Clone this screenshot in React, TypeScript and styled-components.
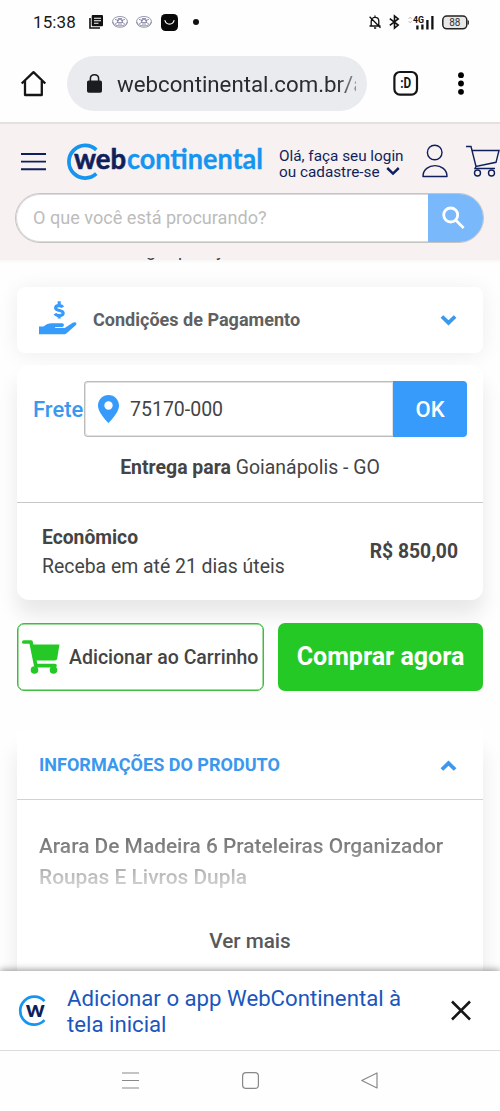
import React from "react";
import styled, { createGlobalStyle } from "styled-components";

const GlobalStyle = createGlobalStyle`
  * { box-sizing: border-box; }
  body { margin: 0; background: #fefefe; font-family: Roboto, "Liberation Sans", sans-serif; color: #444; }
  button { font-family: inherit; margin: 0; padding: 0; border: 0; background: none; color: inherit; }
  svg { display: block; flex: none; overflow: visible; }
`;

const Screen = styled.div`
  width: 500px;
  height: 1111px;
  display: flex;
  flex-direction: column;
  overflow: hidden;
`;

const Label = styled.span<{ size: number; weight?: number; color?: string; track?: number; line?: number }>`
  font-size: ${(p) => p.size}px;
  font-weight: ${(p) => p.weight ?? 400};
  color: ${(p) => p.color ?? "#444"};
  letter-spacing: ${(p) => p.track ?? 0}px;
  line-height: ${(p) => p.line ?? Math.round(p.size * 1.2)}px;
  white-space: nowrap;
`;

/* System status bar */
const StatusBar = styled.div`
  flex: none;
  height: 44px;
  padding: 0 31px 0 33px;
  display: flex;
  justify-content: space-between;
  align-items: center;
`;
const StatusGroup = styled.div<{ gap?: number }>`
  display: flex;
  align-items: center;
  gap: ${(p) => p.gap ?? 0}px;
`;
const Clock = styled(Label)`
  width: 56px;
`;
const NoticeDot = styled.i`
  width: 6px;
  height: 6px;
  margin-left: 7px;
  border-radius: 50%;
  background: #111;
`;

/* Browser toolbar */
const BrowserBar = styled.div`
  flex: none;
  height: 80px;
  padding: 12px 0 11px 20px;
  display: flex;
  align-items: center;
  border-bottom: 2px solid #e5e1e3;
`;
const AddressPill = styled.div`
  width: 300px;
  height: 55px;
  margin: 0 26px 0 20px;
  padding: 0 11px 0 20px;
  border-radius: 28px;
  background: #eaebef;
  display: flex;
  align-items: center;
  gap: 15px;
`;
const Address = styled.div`
  flex: 1;
  overflow: hidden;
  mask-image: linear-gradient(to right, #000 92%, rgba(0, 0, 0, 0.45));
`;
const DotsIcon = styled.svg`
  margin-left: 39px;
`;

/* Store header */
const StoreHeader = styled.header`
  flex: none;
  height: 136px;
  padding-top: 16px;
  background: #f7f1f1;
  box-shadow: 0 1px 3px rgba(120, 80, 80, 0.06);
`;
const HeaderRow = styled.div`
  height: 44px;
  padding-left: 20px;
  display: flex;
  align-items: center;
`;
const MenuIcon = styled.svg`
  margin-right: 20px;
`;
const LoginText = styled.div`
  width: 145px;
  margin: 0 1px 0 16px;
  padding-top: 3px;
  display: flex;
  flex-direction: column;
`;
const LoginLine = styled.div`
  display: flex;
  align-items: center;
  gap: 6px;
  height: 16px;
`;
const UserGlyph = styled.svg`
  margin-right: 18px;
`;
const SearchBox = styled.div`
  width: 469px;
  height: 50px;
  margin: 9px 0 0 15px;
  border-radius: 25px;
  border: 1px solid #c6c3c3;
  box-shadow: inset 0 0 0 1px #dcdada;
  background: #fff;
  overflow: hidden;
  display: flex;
  align-items: stretch;
  justify-content: space-between;
`;
const SearchHint = styled.div`
  display: flex;
  align-items: center;
  padding-left: 17px;
`;
const SearchButton = styled.button`
  width: 55px;
  background: #78b8fb;
  display: flex;
  align-items: center;
  padding-left: 14px;
`;

/* Page content */
const Content = styled.main`
  flex: 1;
  min-height: 0;
  overflow: hidden;
  padding: 0 17px;
  margin-top: -2px;
  z-index: 1;
`;
const HiddenLine = styled.div`
  height: 3px;
  margin-left: 129px;
  overflow: hidden;
  display: flex;
  align-items: flex-end;
`;
const Tail = styled(Label)<{ cell: number }>`
  width: ${(p) => p.cell}px;
  flex: none;
`;
const PaymentCard = styled.section`
  height: 66px;
  margin-top: 26px;
  padding: 0 26px 0 22px;
  border-radius: 8px;
  background: #fff;
  box-shadow: 0 2px 22px rgba(0, 0, 0, 0.07);
  display: flex;
  align-items: center;
`;
const PaymentTitle = styled(Label)`
  flex: 1;
  margin-left: 16px;
`;
const ShippingCard = styled.section`
  height: 235px;
  margin-top: 12px;
  border-radius: 12px;
  background: #fff;
  box-shadow: 0 15px 20px rgba(0, 0, 0, 0.09);
`;
const ZipRow = styled.div`
  padding: 16px 16px 0;
  display: flex;
  align-items: center;
`;
const ZipField = styled.div`
  flex: 1;
  height: 56px;
  border: 1px solid #bcbcbc;
  border-right: 0;
  box-shadow: inset 0 0 0 1px #e2e2e2;
  border-radius: 4px 0 0 4px;
  display: flex;
  align-items: center;
  padding-left: 13px;
  gap: 11px;
`;
const FreightLabel = styled(Label)`
  width: 51px;
  padding-top: 2px;
`;
const OkButton = styled.button`
  width: 74px;
  height: 56px;
  padding-top: 1px;
  border-radius: 0 4px 4px 0;
  background: #369bfb;
`;
const Destination = styled.div`
  height: 66px;
  padding-top: 18px;
  text-align: center;
  border-bottom: 1px solid #c6c8c8;
`;
const OptionRow = styled.div`
  height: 97px;
  padding: 0 25px;
  display: flex;
  align-items: center;
  justify-content: space-between;
`;
const OptionText = styled.div`
  display: flex;
  flex-direction: column;
`;
const Actions = styled.div`
  display: flex;
  gap: 14px;
  margin: 23px 0 0;
`;
const CartButton = styled.button`
  width: 247px;
  height: 68px;
  border: 1.5px solid #3fbc3f;
  box-shadow: inset 0 0 0 0.5px #3fbc3f;
  border-radius: 7px;
  background: #fff;
  display: flex;
  align-items: center;
  padding-left: 4px;
  gap: 9px;
`;
const BuyButton = styled.button`
  flex: 1;
  height: 68px;
  border-radius: 7px;
  background: #25c925;
`;
const InfoCard = styled.section`
  height: 300px;
  margin-top: 39px;
  background: #fff;
  box-shadow: 0 22px 20px rgba(0, 0, 0, 0.09);
`;
const InfoHead = styled.div`
  height: 70px;
  padding: 1px 26px 0 22px;
  display: flex;
  align-items: center;
  justify-content: space-between;
  border-bottom: 1px solid #d2d2d2;
`;
const Description = styled.div`
  padding: 31px 0 0 22px;
  display: flex;
  flex-direction: column;
  mask-image: linear-gradient(to bottom, #000 0, rgba(0, 0, 0, 0.7) 44px, rgba(0, 0, 0, 0.3) 80px, rgba(0, 0, 0, 0.15) 95px);
`;
const More = styled.div`
  padding-top: 36px;
  text-align: center;
`;

/* Install prompt and system navigation */
const InstallBanner = styled.aside`
  flex: none;
  z-index: 2;
  height: 80px;
  padding: 0 29px 0 19px;
  display: flex;
  align-items: center;
  background: #fff;
  border-bottom: 1px solid #dcdcdc;
  box-shadow: 0 -1px 7px rgba(0, 0, 0, 0.42);
`;
const InstallText = styled.div`
  flex: 1;
  margin-left: 19px;
  display: flex;
  flex-direction: column;
`;
const SystemNav = styled.nav`
  flex: none;
  z-index: 2;
  height: 60px;
  padding: 0 122px 2px;
  background: #fefefe;
  display: flex;
  align-items: center;
  justify-content: space-between;
`;

const NAVY = "#101f5c";
const BLUE = "#3a98ee";

const NewsIcon = () => (
  <svg width="14" height="14" viewBox="0 0 14 14">
    <path d="M1 3v10h10" fill="none" stroke="#111" strokeWidth="1.6" />
    <rect x="2.7" y="0" width="11.3" height="11.2" rx="1" fill="#111" />
    <path d="M5 3.2h7M5 5.7h7M5 8.2h4.5" stroke="#fff" strokeWidth="1.1" />
  </svg>
);

const DiscIcon = () => (
  <svg width="16" height="12" viewBox="0 0 16 12" fill="none" stroke="#7b7b9c" strokeWidth="0.8">
    <ellipse cx="8" cy="5.2" rx="7.4" ry="4.7" />
    <path d="M.6 6c0 7 14.8 7 14.8 0M3 3.4l4 1.2M13 3.4L9 4.6M3.3 7.6L6.5 6M12.6 7.6L9.5 6" />
    <ellipse cx="8" cy="5" rx="2.8" ry="1.6" />
    <path d="M6 2.5h4M6 8h4" />
  </svg>
);

const BagIcon = () => (
  <svg width="17" height="17" viewBox="0 0 17 17">
    <rect width="17" height="17" rx="4.5" fill="#080808" />
    <path d="M4 6.5c1 4.8 8 4.8 9 0" fill="none" stroke="#fff" strokeWidth="1.2" strokeLinecap="round" />
  </svg>
);

const MutedBell = () => (
  <svg width="12" height="14" viewBox="0 0 12 14" fill="none" stroke="#111" strokeWidth="1.3">
    <path d="M2.2 10.7V6.2c0-5 7.6-5 7.6 0v4.5M.5 11h11M6 .4v2M5 13h2.2M.6 1.7l10.900 11" />
  </svg>
);

const BluetoothIcon = () => (
  <svg width="11" height="14" viewBox="0 0 11 14" fill="none" stroke="#111" strokeWidth="1.6">
    <path d="M.8 3.6l8.400 6.400-3.700 3V1l3.700 3-8.400 6.400" />
  </svg>
);

const SignalIcon = () => (
  <svg width="26" height="15" viewBox="0 0 26 15">
    <path d="M.6 4L2.2 2l1.600 2M.6 6L2.2 8l1.600-2" fill="none" stroke="#bbb" strokeWidth="0.9" />
    <text x="5" y="8.2" fontFamily="Roboto, sans-serif" fontSize="9" fontWeight="700" fill="#111" textLength="11" lengthAdjust="spacingAndGlyphs">4G</text>
    <path d="M9.4 10.500v4M14.4 9.500v5M19.400 5v9.500M24.400 1v13.500" stroke="#111" strokeWidth="2.3" />
  </svg>
);

const BatteryIcon = () => (
  <svg width="27" height="15" viewBox="0 0 27 15">
    <rect x="0.8" y="1" width="24" height="12.8" rx="4" fill="#e8e8e8" stroke="#222" strokeWidth="1.5" />
    <path d="M26.300 5.400v4" stroke="#222" strokeWidth="1.2" />
    <text x="12.8" y="11.2" fontFamily="Roboto, sans-serif" fontSize="10" fill="#333" textAnchor="middle">88</text>
  </svg>
);

const HomeIcon = () => (
  <svg width="27" height="28" viewBox="0 0 27 28" fill="none" stroke="#151515" strokeWidth="2.3">
    <path d="M1.700 13.500L13.500 2.100 25.300 13.500M5 11v14h16.800V11" strokeLinejoin="round" />
  </svg>
);

const LockIcon = () => (
  <svg width="15" height="19" viewBox="0 0 15 19">
    <rect x="0" y="6.5" width="15" height="12.2" rx="1.8" fill="#1b1c1f" />
    <path d="M3.400 7V4.500c0-5 8.200-5 8.200 0V7" fill="none" stroke="#1b1c1f" strokeWidth="1.5" />
  </svg>
);

const TabsIcon = () => (
  <svg width="26" height="26" viewBox="0 0 26 26">
    <rect x="1.400" y="1" width="22.600" height="22.600" rx="5.5" fill="none" stroke="#151515" strokeWidth="2.2" />
    <text x="12.7" y="17.3" fontFamily="Roboto, sans-serif" fontSize="14" fontWeight="700" fill="#151515" textAnchor="middle" textLength="11" lengthAdjust="spacingAndGlyphs">:D</text>
  </svg>
);

const Logo = () => (
  <svg width="197" height="38" viewBox="0 0 197 38">
    <path d="M30.300 6.800A16.300 16.300 0 1 0 30.300 30.700" fill="none" stroke="#1595f0" strokeWidth="3.7" />
    <text x="8" y="25.7" fontFamily="Lato, sans-serif" fontSize="28" fontWeight="700" fill={NAVY} stroke={NAVY} strokeWidth="0.6" textLength="52" lengthAdjust="spacingAndGlyphs">web</text>
    <text x="61" y="25.7" fontFamily="Lato, sans-serif" fontSize="28" fontWeight="700" fill="#1595f0" stroke="#1595f0" strokeWidth="0.3" textLength="136" lengthAdjust="spacingAndGlyphs">continental</text>
  </svg>
);

const Chevron = ({ color, width, up }: { color: string; width: number; up?: boolean }) => (
  <svg width={width} height="11" viewBox="0 0 16 11" fill="none" stroke={color} strokeWidth={width > 14 ? 3.8 : 2.8}>
    <path d={up ? "M1.400 9.500L8 3.200 14.600 9.500" : "M1.400 1.500L8 7.800 14.600 1.500"} />
  </svg>
);

const UserIcon = () => (
  <UserGlyph width="26" height="34" viewBox="0 0 26 34" fill="none" stroke={NAVY} strokeWidth="1.4">
    <circle cx="12.700" cy="7.500" r="7.300" />
    <path d="M1 31.500c0-14.500 24-14.500 24 0z" strokeLinejoin="round" />
  </UserGlyph>
);

const HeaderCart = () => (
  <svg width="34" height="33" viewBox="0 0 34 33" fill="none" stroke={NAVY} strokeWidth="1.4">
    <path d="M0 .5h5l5 20L30 16.300l3-11.800H6.200M10 20.500l-1 2h20" />
    <circle cx="11.500" cy="27" r="3" />
    <circle cx="25.500" cy="27" r="3" />
  </svg>
);

const SearchIcon = () => (
  <svg width="23" height="23" viewBox="0 0 23 23" fill="none" stroke="#fff" strokeWidth="2.8">
    <circle cx="8.700" cy="8" r="7" />
    <path d="M13.600 13.100l8 8" />
  </svg>
);

const HandMoney = () => (
  <svg width="38" height="34" viewBox="0 0 38 34" fill="#369bfb">
    <path d="M0 23.500h4.500c3-2.300 5-3.200 8-3.200h10.500c2.600 0 2.600 3.600 0 3.600h-6.800v1.200h9.500l8-5.300c2.700-1.700 5 .4 3 2.500l-8.800 7.700c-1 .9-1.800 1.300-3 1.300H0z" />
    <path d="M23.800 4.300c-1.200-2.200-7.200-2.400-7.200.7 0 3.400 7.600 1.600 7.600 5 0 3.400-6.800 3.300-8.200.6M20.200-1.700v4M20.200 11.800v3.600" fill="none" stroke="#369bfb" strokeWidth="3.1" />
  </svg>
);

const PinIcon = () => (
  <svg width="21" height="28" viewBox="0 0 21 28">
    <path fillRule="evenodd" fill="#369bfb" d="M10.500 0C4.700 0 0 4.700 0 10.500 0 18 10.500 28 10.500 28S21 18 21 10.500C21 4.700 16.300 0 10.500 0zm0 6.300a4.200 4.200 0 1 1 0 8.400 4.200 4.200 0 0 1 0-8.400z" />
  </svg>
);

const CartIcon = () => (
  <svg width="38" height="34" viewBox="0 0 38 34">
    <path d="M1.800 2h7.200l4.800 23.600H33" fill="none" stroke="#25c925" strokeWidth="3.7" strokeLinecap="round" strokeLinejoin="round" />
    <path d="M8.500 4.500h29L35.200 18.500q-.4 2-2.400 2H12z" fill="#25c925" />
    <circle cx="12.500" cy="30" r="3.800" fill="#25c925" />
    <circle cx="31.500" cy="30" r="3.800" fill="#25c925" />
  </svg>
);

const AppBadge = () => (
  <svg width="29" height="32" viewBox="0 0 29 32">
    <path d="M25.500 6.200A14 14 0 1 0 25.500 25.200" fill="none" stroke="#1595f0" strokeWidth="2.7" />
    <text x="6.7" y="21.6" fontFamily="Lato, sans-serif" fontSize="23" fontWeight="900" fill={NAVY} textLength="19" lengthAdjust="spacingAndGlyphs">w</text>
  </svg>
);

export default function App() {
  return (
    <Screen>
      <GlobalStyle />
      <StatusBar>
        <StatusGroup>
          <Clock size={17} color="#161616" track={0.1}>15:38</Clock>
          <StatusGroup gap={8.5}>
            <NewsIcon />
            <DiscIcon />
            <DiscIcon />
            <BagIcon />
            <NoticeDot />
          </StatusGroup>
        </StatusGroup>
        <StatusGroup gap={8}>
          <MutedBell />
          <BluetoothIcon />
          <SignalIcon />
          <BatteryIcon />
        </StatusGroup>
      </StatusBar>

      <BrowserBar>
        <HomeIcon />
        <AddressPill>
          <LockIcon />
          <Address><Label size={22.25} line={30} color="#2a2b2e">webcontinental.com.br/a</Label></Address>
        </AddressPill>
        <TabsIcon />
        <DotsIcon width="6" height="24" viewBox="0 0 6 24">
          <circle cx="3" cy="3.2" r="2.9" />
          <circle cx="3" cy="11.5" r="2.9" />
          <circle cx="3" cy="19.8" r="2.9" />
        </DotsIcon>
      </BrowserBar>

      <StoreHeader>
        <HeaderRow>
          <MenuIcon width="26" height="17" viewBox="0 0 26 17">
            <path d="M1 0h25M1 7.600h25M1 15.300h25" stroke={NAVY} strokeWidth="1.9" />
          </MenuIcon>
          <Logo />
          <LoginText>
            <LoginLine><Label size={15.3} color={NAVY}>Olá, faça seu login</Label></LoginLine>
            <LoginLine>
              <Label size={15.3} color={NAVY}>ou cadastre-se</Label>
              <Chevron color={NAVY} width={14} />
            </LoginLine>
          </LoginText>
          <UserIcon />
          <HeaderCart />
        </HeaderRow>
        <SearchBox>
          <SearchHint><Label size={18.1} color="#bcbcbc">O que você está procurando?</Label></SearchHint>
          <SearchButton aria-label="Buscar"><SearchIcon /></SearchButton>
        </SearchBox>
      </StoreHeader>

      <Content>
        <HiddenLine>
          <Tail size={18} cell={32}>g</Tail>
          <Tail size={18} cell={38}>p</Tail>
          <Tail size={18} cell={12}>y</Tail>
        </HiddenLine>
        <PaymentCard>
          <HandMoney />
          <PaymentTitle size={18.05} weight={700} color="#606060">Condições de Pagamento</PaymentTitle>
          <Chevron color={BLUE} width={17} />
        </PaymentCard>

        <ShippingCard>
          <ZipRow>
            <FreightLabel size={22} weight={500} color={BLUE}>Frete</FreightLabel>
            <ZipField>
              <PinIcon />
              <Label size={19.5}>75170-000</Label>
            </ZipField>
            <OkButton><Label size={22} weight={500} color="#fff">OK</Label></OkButton>
          </ZipRow>
          <Destination>
            <Label size={19.45} line={26}><b>Entrega para</b> Goianápolis - GO</Label>
          </Destination>
          <OptionRow>
            <OptionText>
              <Label size={19.3} line={29} weight={700}>Econômico</Label>
              <Label size={19.4} line={29}>Receba em até 21 dias úteis</Label>
            </OptionText>
            <Label size={19.3} line={24} weight={700}>R$ 850,00</Label>
          </OptionRow>
        </ShippingCard>

        <Actions>
          <CartButton>
            <CartIcon />
            <Label size={19.5} weight={500}>Adicionar ao Carrinho</Label>
          </CartButton>
          <BuyButton><Label size={25} weight={700} color="#fff">Comprar agora</Label></BuyButton>
        </Actions>

        <InfoCard>
          <InfoHead>
            <Label size={18.05} weight={700} color={BLUE}>INFORMAÇÕES DO PRODUTO</Label>
            <Chevron color={BLUE} width={17} up />
          </InfoHead>
          <Description>
            <Label size={20.9} line={31} weight={500}>Arara De Madeira 6 Prateleiras Organizador</Label>
            <Label size={20.9} line={31} weight={500}>Roupas E Livros Dupla</Label>
          </Description>
          <More><Label size={20.7} line={24} weight={500} color="#585858">Ver mais</Label></More>
        </InfoCard>
      </Content>

      <InstallBanner>
        <AppBadge />
        <InstallText>
          <Label size={22.2} line={26} color="#1a56bd">Adicionar o app WebContinental à</Label>
          <Label size={22.2} line={26} color="#1a56bd">tela inicial</Label>
        </InstallText>
        <svg width="20" height="20" viewBox="0 0 20 20"><path d="M1 .5l18 18M19 .5L1 18.500" stroke="#161616" strokeWidth="2.6" /></svg>
      </InstallBanner>
      <SystemNav>
        <svg width="17" height="17" viewBox="0 0 17 17"><path d="M0 1h17M0 8.500h17M0 16h17" stroke="#888" strokeWidth="1.2" /></svg>
        <svg width="17" height="17" viewBox="0 0 17 17"><rect x="0.6" y="0.6" width="15.8" height="15.8" rx="3.5" fill="none" stroke="#888" strokeWidth="1.2" /></svg>
        <svg width="17" height="17" viewBox="0 0 17 17"><path d="M16 1v15L.8 8.500z" fill="none" stroke="#888" strokeWidth="1.2" strokeLinejoin="round" /></svg>
      </SystemNav>
    </Screen>
  );
}
